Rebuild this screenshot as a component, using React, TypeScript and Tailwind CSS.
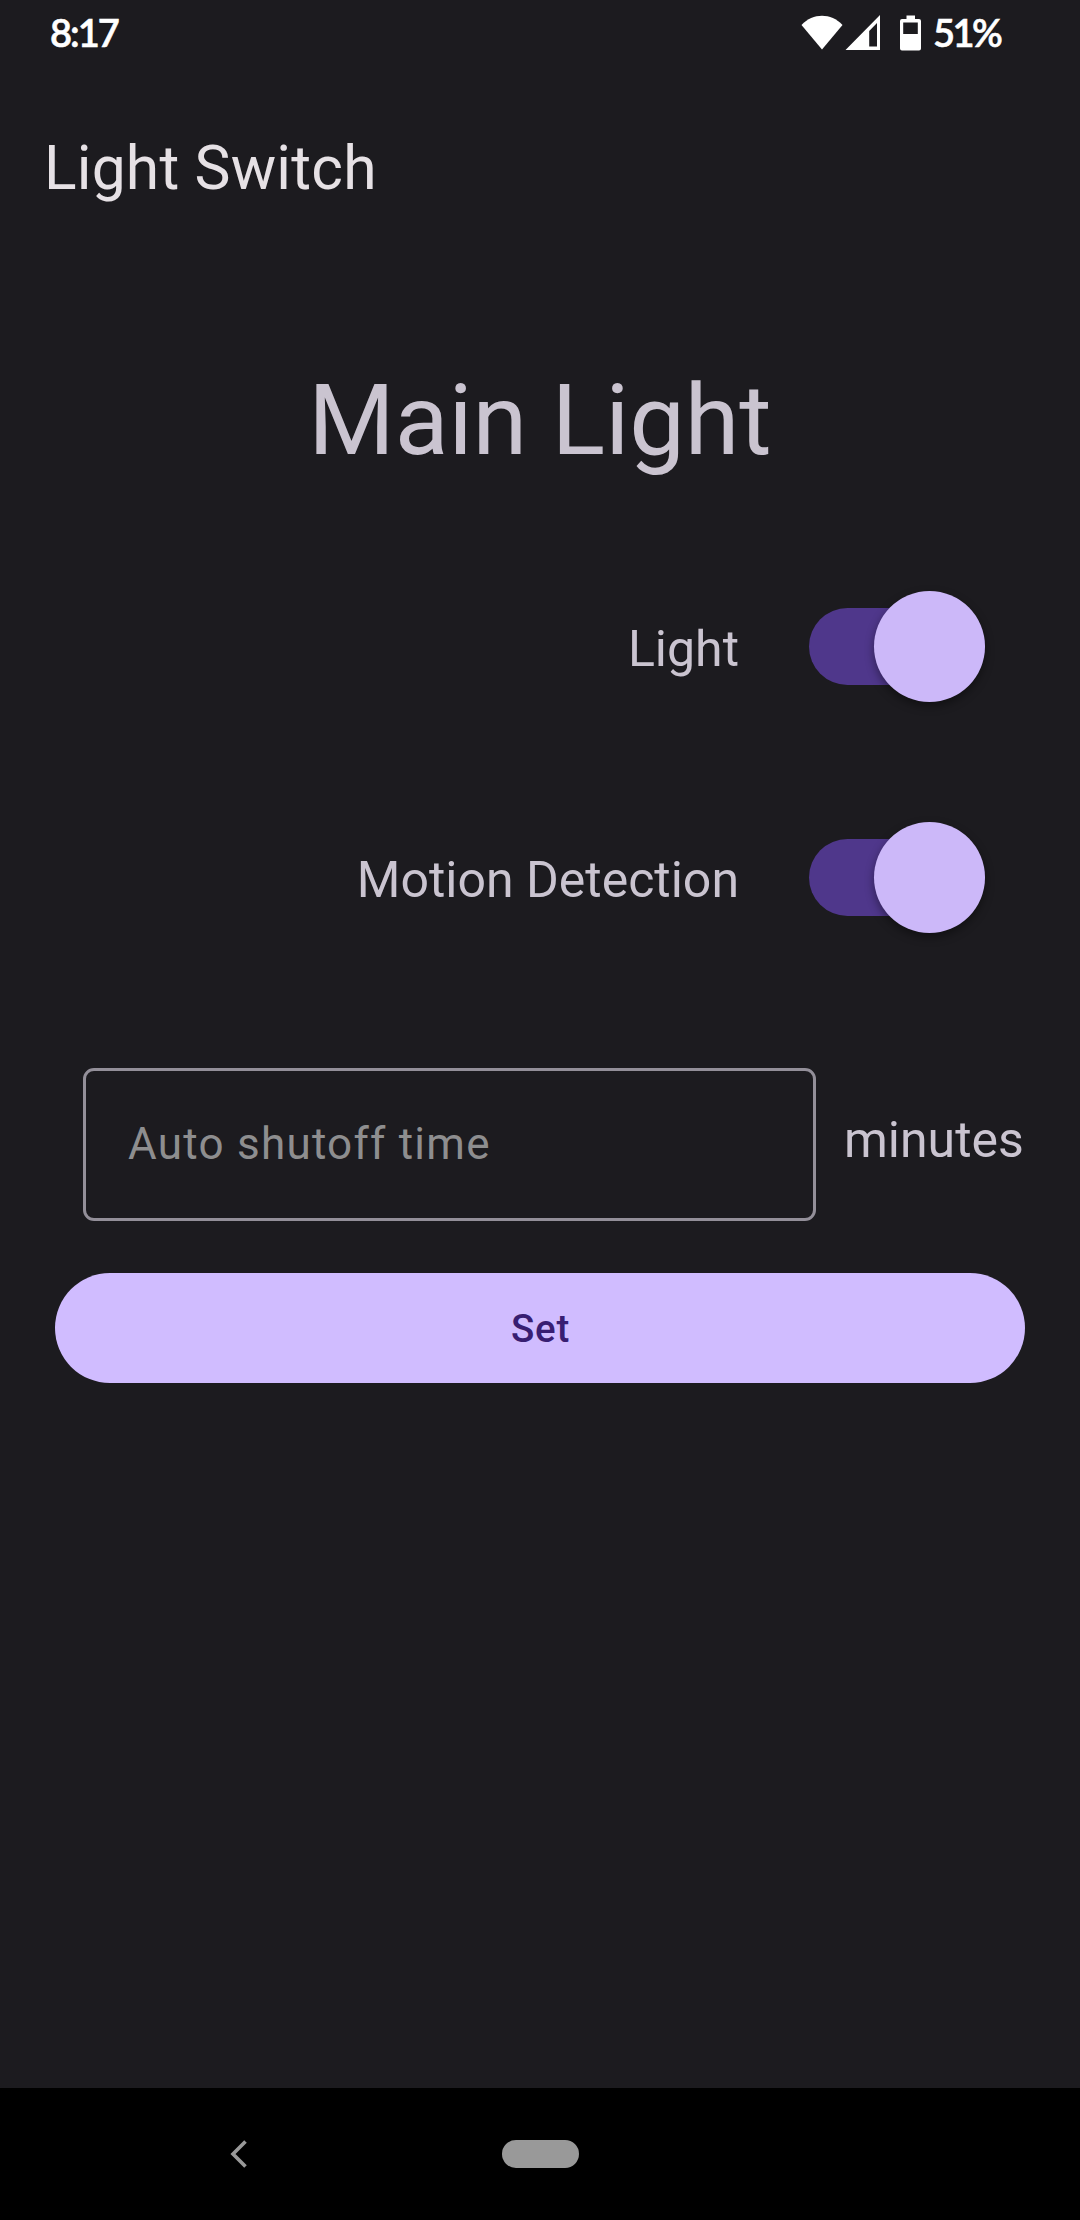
import React from "react";

function StatusBar() {
  return (
    <header className="flex h-[66px] items-center justify-between pl-[50px] text-white">
      <span className="pb-[2px] font-[Lato,sans-serif] text-[38px] font-semibold leading-[64px] tracking-[-2px] [-webkit-text-stroke:0.6px_white]">8:17</span>
      <div className="flex w-[279px] items-center">
        <svg className="h-[36px] w-[42px]" viewBox="0 0 42 36" fill="currentColor">
          <path d="M0.5 10C12 -2.2 30 -2.2 41.5 10L21 34.500Z" />
        </svg>
        <svg className="ml-[2px] h-[36px] w-[36px]" viewBox="0 0 36 36" fill="currentColor">
          <path fillRule="evenodd" d="M35 0V35H0.5ZM32 8L24.200 16V31.500H32Z" />
        </svg>
        <svg className="ml-[18px] h-[36px] w-[22px]" viewBox="0 0 22 36" fill="currentColor">
          <path fillRule="evenodd" d="M7.500 0.500H16V4H20Q22 4 22 6V33.500Q22 35.500 20 35.500H3Q1 35.500 1 33.500V6Q1 4 3 4H7.500ZM4.200 7.500V19H18.800V7.500Z" />
        </svg>
        <span className="ml-[12px] pb-[2px] font-[Lato,sans-serif] text-[38px] font-semibold leading-[64px] tracking-[-2.6px] [-webkit-text-stroke:0.6px_white]">51%</span>
      </div>
    </header>
  );
}

function ToggleRow({ label }: { label: string }) {
  return (
    <div className="flex h-[231px] items-center justify-end pr-[95px]">
      <span className="pt-[5px] text-[50px] leading-[60px] text-[#cac4d0]">{label}</span>
      <button role="switch" aria-checked="true" aria-label={label} className="ml-[70px] flex h-[77px] w-[176px] items-center justify-end rounded-full bg-[#4f378b]">
        <span className="size-[111px] shrink-0 rounded-full bg-[#ccb8f9] shadow-[0_4px_10px_rgba(0,0,0,0.4)]" />
      </button>
    </div>
  );
}

export default function App() {
  return (
    <div className="flex h-[2220px] w-[1080px] flex-col overflow-hidden bg-[#1c1b1f] font-[Roboto,sans-serif]">
      <StatusBar />
      <div className="flex h-[204px] items-center pl-[44px] pt-[2px]">
        <h1 className="text-[60.5px] leading-[72px] tracking-[0.2px] text-[#e6e1e5]">Light Switch</h1>
      </div>
      <main className="flex flex-1 flex-col">
        <div className="flex h-[261px] items-center justify-center pt-[39px]">
          <h2 className="text-[99px] leading-[116px] text-[#cac4d0]">Main Light</h2>
        </div>
        <ToggleRow label="Light" />
        <ToggleRow label="Motion Detection" />
        <div className="mt-[75px] flex items-center pl-[83px]">
          <input
            type="text"
            placeholder="Auto shutoff time"
            className="h-[153px] w-[733px] rounded-[11px] border-[3px] border-[#938f99] bg-transparent px-[42px] pb-[2px] text-[44px] tracking-[1.25px] text-[#e6e1e5] outline-none placeholder:text-[#8e8e8f]"
          />
          <span className="ml-[28px] pb-[9px] text-[50px] leading-[60px] text-[#cac4d0]">minutes</span>
        </div>
        <button className="mx-[55px] mt-[52px] h-[110px] rounded-full bg-[#d0bcff] pl-[1px] pt-[2px] text-[38.5px] font-medium tracking-[0.7px] text-[#381e72]">
          Set
        </button>
      </main>
      <nav className="flex h-[132px] items-center bg-black text-[#999999]">
        <svg className="ml-[230px] h-[30px] w-[18px]" viewBox="0 0 18 30" fill="none" stroke="currentColor" strokeWidth="3.600">
          <path d="M15.500 2.500L3 15L15.500 27.500" />
        </svg>
        <span className="ml-[254px] h-[28px] w-[77px] rounded-full bg-[#999999]" />
      </nav>
    </div>
  );
}
